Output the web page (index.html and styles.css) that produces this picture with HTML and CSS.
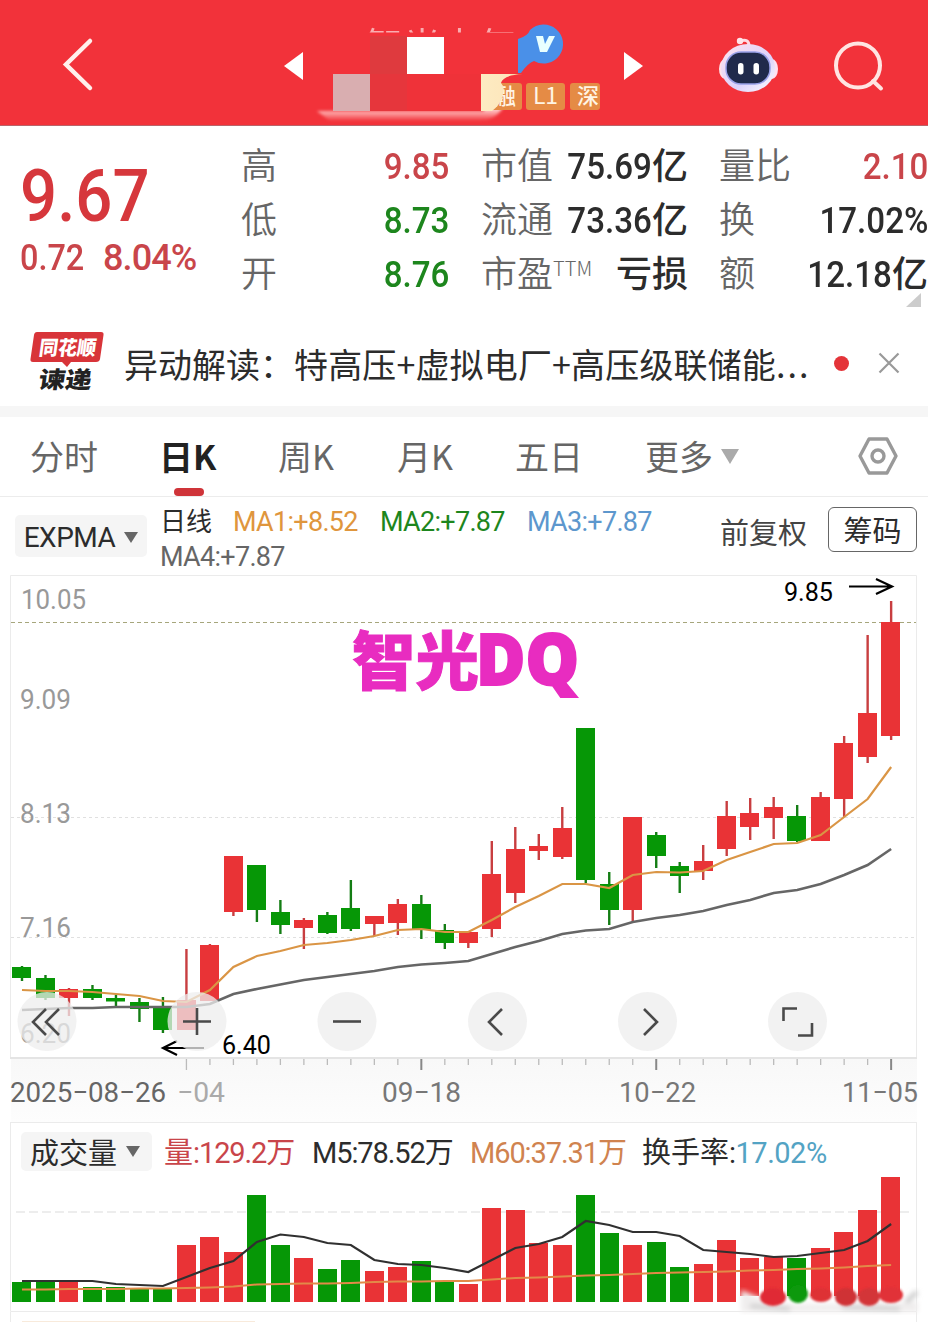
FILE: index.html
```
<!DOCTYPE html>
<html lang="zh-CN">
<head>
<meta charset="utf-8">
<title>日K</title>
<link rel="stylesheet" href="styles.css">
</head>
<body>
<header class="topbar">
  <svg width="928" height="126" viewBox="0 0 928 126">
    <defs>
      <linearGradient id="fade" x1="0" y1="0" x2="0" y2="1"><stop offset="0" stop-color="#fff"/><stop offset=".4" stop-color="#fbb"/><stop offset="1" stop-color="#f2323a"/></linearGradient>
      <linearGradient id="cream" x1="0" y1="0" x2="1" y2="0"><stop offset="0" stop-color="#fdebc2"/><stop offset=".7" stop-color="#fde6bb"/><stop offset="1" stop-color="#f0ae70"/></linearGradient>
      <linearGradient id="helmet" x1="0" y1="0" x2="1" y2="1"><stop offset="0" stop-color="#ffe3ee"/><stop offset=".6" stop-color="#dcd2fb"/><stop offset="1" stop-color="#fff"/></linearGradient>
      <clipPath id="sliver"><rect x="360" y="25" width="160" height="7.500"/></clipPath>
      <filter id="soft"><feGaussianBlur stdDeviation="1.6"/></filter>
    </defs>
    <path d="M90 41L66 64.500L90 88" fill="none" stroke="#fff0ec" stroke-width="4.500" stroke-linecap="round"/>
    <path d="M303 52V80L284 66Z" fill="#fff"/>
    <path d="M624 52V80L643 66Z" fill="#fff"/>
    <g clip-path="url(#sliver)"><text class="cjk" x="366" y="60" font-size="37" textLength="150" fill="#fff" opacity=".6">智光电气</text></g>
    <path d="M370 36H407V74H444V110H370Z" fill="#df3a3e"/>
    <path d="M407 74H444V110H395Z" fill="#ef3238"/>
    <path d="M317 111H484V104H505Q497 121 478 121H330Z" fill="url(#fade)" filter="url(#soft)"/>
    <rect x="370" y="74" width="111" height="37" fill="#ef3239"/>
    <rect x="370" y="74" width="37" height="37" fill="#e6363c"/>
    <rect x="333" y="74" width="37" height="37" fill="#d9aeb0"/>
    <rect x="407" y="37" width="37" height="37" fill="#fff"/>
    <path d="M518 39Q528 36 530 30A19.500 19.500 0 1 1 534 61Q528 63 521 73H518Z" fill="#4a90e8"/>
    <path d="M536 36H543L545 44L549 36H555L547 52H540Z" fill="#e8ffff"/>
    <rect x="484" y="83" width="38" height="27" rx="3" fill="#e58b45"/>
    <text class="cjk" x="494" y="104" font-size="22" font-weight="500" fill="#fff4e4">融</text>
    <path d="M481 74H523Q503 75 501 83Q506 88 502 97Q500 105 492 111H481Z" fill="url(#cream)"/>
    <rect x="526" y="83" width="39" height="27" rx="3" fill="#e58b45"/>
    <text class="cjk" x="533" y="104" font-size="23" textLength="25" fill="#fff4e4">L1</text>
    <rect x="570" y="83" width="30" height="27" rx="3" fill="#e58b45"/>
    <text class="cjk" x="577" y="104" font-size="22" font-weight="500" fill="#fff4e4">深</text>
    <path d="M740 41Q749 38 749 46" fill="none" stroke="#ffd9e2" stroke-width="3"/><circle cx="740" cy="41" r="3.200" fill="#ffe5ea"/>
    <ellipse cx="725" cy="69" rx="6" ry="10" fill="#ffe1e8"/><ellipse cx="772" cy="69" rx="6" ry="10" fill="#ffe1f2"/>
    <ellipse cx="748" cy="68" rx="27" ry="24" fill="url(#helmet)"/>
    <rect x="726" y="52" width="44" height="32" rx="15" fill="#202a4b" stroke="#98a0e8" stroke-width="1.500"/>
    <rect x="738" y="63" width="5.500" height="11.500" rx="2.700" fill="#fff"/><rect x="753.500" y="63" width="5.500" height="11.500" rx="2.700" fill="#fff"/>
    <circle cx="858" cy="65.500" r="22" fill="none" stroke="#ffe5e2" stroke-width="4"/>
    <path d="M873 81L881 88.500" stroke="#ffe5e2" stroke-width="4" stroke-linecap="round"/>
  </svg>
</header>

<section class="quote">
  <div class="last">
    <div class="price">9.67</div>
    <div class="change"><em>0.72</em><span>8.04%</span></div>
  </div>
  <dl class="stats stats-a">
    <dt>高</dt><dd class="up"><em>9.85</em></dd>
    <dt>低</dt><dd class="down"><em>8.73</em></dd>
    <dt>开</dt><dd class="down"><em>8.76</em></dd>
  </dl>
  <dl class="stats stats-b">
    <dt>市值</dt><dd><em>75.69</em><i>亿</i></dd>
    <dt>流通</dt><dd><em>73.36</em><i>亿</i></dd>
    <dt>市盈<sup>TTM</sup></dt><dd><i>亏损</i></dd>
  </dl>
  <dl class="stats stats-c">
    <dt>量比</dt><dd class="up"><em>2.10</em></dd>
    <dt>换</dt><dd><em>17.02%</em></dd>
    <dt>额</dt><dd><em>12.18</em><i>亿</i></dd>
  </dl>
  <span class="corner"></span>
</section>

<section class="news">
  <svg class="brand" width="76" height="66" viewBox="0 0 76 66">
    <path d="M7 3H71Q74 3 73.500 6L70 30Q69.500 33 66 33H41L37 38L32 33H3Q0 33 .5 30L4 6Q4.500 3 7 3Z" fill="#d83439"/>
    <g transform="skewX(-8)" class="cjk" font-weight="900">
      <text x="12" y="26" font-size="20" textLength="57" lengthAdjust="spacingAndGlyphs" fill="#fff">同花顺</text>
      <text x="16" y="59" font-size="23" textLength="53" lengthAdjust="spacingAndGlyphs" fill="#222">谏递</text>
    </g>
  </svg>
  <p class="headline">异动解读：<span>特高压+虚拟电厂+高压级联储能<b>...</b></span></p>
  <span class="dot"></span>
  <svg class="close" width="22" height="22" viewBox="0 0 22 22"><path d="M1.500 1.500L20.500 20.500M20.500 1.500L1.500 20.500" stroke="#999" stroke-width="2.200"/></svg>
</section>

<nav class="tabs">
  <span class="tab t1">分时</span>
  <span class="tab t2 active">日K</span>
  <span class="tab t3">周K</span>
  <span class="tab t4">月K</span>
  <span class="tab t5">五日</span>
  <span class="tab t6">更多<i class="caret"></i></span>
  <svg class="gear" width="40" height="38" viewBox="0 0 40 38"><path d="M11 2H29L38 19L29 36H11L2 19Z" fill="none" stroke="#999" stroke-width="3.400" stroke-linejoin="round"/><circle cx="20" cy="19" r="6" fill="none" stroke="#999" stroke-width="3.400"/></svg>
</nav>

<section class="indicator">
  <div class="select">EXPMA<i class="caret small"></i></div>
  <div class="legend">
    <div class="row"><span class="period">日线</span><span class="ma1">MA1:+8.52</span><span class="ma2">MA2:+7.87</span><span class="ma3">MA3:+7.87</span></div>
    <div class="row"><span class="ma4">MA4:+7.87</span></div>
  </div>
  <span class="adjust">前复权</span>
  <span class="chips">筹码</span>
</section>

<section class="chart">
  <svg id="kline" width="928" height="547" viewBox="0 575 928 547">
    <defs><linearGradient id="axisbg" x1="0" y1="0" x2="0" y2="1"><stop offset="0" stop-color="#f8f8f8"/><stop offset="1" stop-color="#fdfdfd"/></linearGradient></defs>
    <rect x="11" y="1059" width="906" height="63" fill="url(#axisbg)"/>
    <path d="M10.500 1058V575.500H916.500V1058" fill="none" stroke="#ebebeb"/>
    <path d="M10 1058H917" stroke="#e4e4e4" stroke-width="2"/>
    <path d="M11 817.500H916M11 937.500H916" stroke="#e0e0e0" stroke-dasharray="3 3"/>
    <path d="M11 622.500H916" stroke="#a6a67c" stroke-dasharray="4 3"/>
    <g class="num" font-size="27" fill="#999">
      <text x="21" y="609" textLength="65" lengthAdjust="spacingAndGlyphs">10.05</text>
      <text x="20" y="709" textLength="51" lengthAdjust="spacingAndGlyphs">9.09</text>
      <text x="20" y="823" textLength="51" lengthAdjust="spacingAndGlyphs">8.13</text>
      <text x="20" y="937" textLength="51" lengthAdjust="spacingAndGlyphs">7.16</text>
      <text x="20" y="1043" textLength="51" lengthAdjust="spacingAndGlyphs">6.20</text>
    </g>
    <g id="candles"></g>
    <g fill="#e82cc0" stroke="#e82cc0">
      <text class="cjk" x="352" y="684" font-size="63" font-weight="900" textLength="127" lengthAdjust="spacingAndGlyphs">智光</text>
      <text class="latin" x="476" y="685" font-size="71" font-weight="800" textLength="103" lengthAdjust="spacingAndGlyphs" stroke-width="2">DQ</text>
    </g>
    <g fill="none" stroke="#000" stroke-width="2.200">
      <path d="M849 586.500H891M876 579L892 586.500L876 594"/>
      <path d="M204 1048H163M177 1041L163 1048L177 1055"/>
    </g>
    <g class="num" font-size="26" fill="#000">
      <text x="784" y="601" textLength="49" lengthAdjust="spacingAndGlyphs">9.85</text>
      <text x="222" y="1054" textLength="49" lengthAdjust="spacingAndGlyphs">6.40</text>
    </g>
    <g fill="#eee" fill-opacity=".75">
      <circle cx="47" cy="1021.500" r="29.500"/><circle cx="197" cy="1021.500" r="29.500"/><circle cx="347" cy="1021.500" r="29.500"/><circle cx="497.500" cy="1021.500" r="29.500"/><circle cx="647.500" cy="1021.500" r="29.500"/><circle cx="797.500" cy="1021.500" r="29.500"/>
    </g>
    <g fill="none" stroke="#4a4a4a" stroke-width="2.600">
      <path d="M46 1009L33 1022L46 1035M59 1009L46 1022L59 1035"/>
      <path d="M183 1021.500H211M197 1008V1035"/>
      <path d="M333 1021.500H361"/>
      <path d="M502 1009L489 1022L502 1035"/>
      <path d="M644 1009L657 1022L644 1035"/>
      <path d="M783.500 1021V1008.500H797M812 1023V1035.500H798"/>
    </g>
    <g id="ticks"></g>
    <g class="num" font-size="28" fill="#666">
      <text x="10" y="1102" textLength="156" lengthAdjust="spacingAndGlyphs">2025−08−26</text>
      <text x="177" y="1102" textLength="48" lengthAdjust="spacingAndGlyphs" fill="#aaa">−04</text>
      <text x="382" y="1102" textLength="79" lengthAdjust="spacingAndGlyphs" fill="#777">09−18</text>
      <text x="619" y="1102" textLength="77" lengthAdjust="spacingAndGlyphs" fill="#777">10−22</text>
      <text x="842" y="1102" textLength="76" lengthAdjust="spacingAndGlyphs" fill="#777">11−05</text>
    </g>
  </svg>
</section>

<section class="volume">
  <div class="vol-head">
    <div class="select">成交量<i class="caret small"></i></div>
    <span class="v1">量<em>:129.2</em>万</span>
    <span class="v2"><em>M5:78.52</em>万</span>
    <span class="v3"><em>M60:37.31</em>万</span>
    <span class="v4">换手率<em>:<b>17.02%</b></em></span>
  </div>
  <svg id="vol" width="928" height="145" viewBox="0 1177 928 145">
    <defs>
      <filter id="smear"><feGaussianBlur stdDeviation="2.500"/></filter>
      <filter id="edge"><feGaussianBlur stdDeviation="1"/></filter>
    </defs>
    <path d="M10.500 1170V1311M916.500 1170V1311M10.500 1322V1311.500H916.500V1322" fill="none" stroke="#ebebeb"/>
    <path d="M16 1212H912" stroke="#e8e8e8" stroke-width="1.500" stroke-dasharray="9 4"/>
    <path d="M22 1321.500H255" stroke="#f8eadb"/>
    <g id="bars"></g>
    <g filter="url(#smear)">
      <path d="M741 1290L763 1299L790 1304L918 1302V1312H741Z" fill="#f0eeee"/>
      <path d="M750 1306L790 1309M842 1307L900 1309" stroke="#ccc" stroke-width="4"/>
      <path d="M906 1302L917 1292" stroke="#ccc" stroke-width="5"/>
    </g>
    <g filter="url(#edge)">
      <ellipse cx="773" cy="1297" rx="13" ry="9" fill="#e02c36"/>
      <ellipse cx="798" cy="1294" rx="10" ry="9" fill="#0a990a"/>
      <ellipse cx="821" cy="1295" rx="11" ry="7" fill="#de3036"/>
      <ellipse cx="846" cy="1297" rx="11" ry="9" fill="#cf3036"/>
      <ellipse cx="869" cy="1297" rx="11" ry="9" fill="#d33438"/>
      <ellipse cx="891" cy="1295" rx="12" ry="8" fill="#e13238"/>
    </g>
  </svg>
</section>
<script src="chart.js"></script>
</body>
</html>
```
FILE: styles.css
```
* { box-sizing: border-box; }
body { margin: 0; width: 928px; height: 1322px; overflow: hidden; background: #fff; color: #2c2c2c; font-family: Roboto, "Noto Sans CJK SC", sans-serif; }
i, em { font-style: normal; }
svg { display: block; flex: none; }
.cjk { font-family: "Noto Sans CJK SC", sans-serif; }
.num { font-family: Roboto, sans-serif; }
.latin { font-family: "Open Sans", "Noto Sans", sans-serif; }

.topbar { height: 126px; background: #f2323a; border-bottom: 1px solid #b9646a; }

.quote { position: relative; display: flex; height: 194px; padding-top: 14px; white-space: nowrap; }
.last { width: 241px; padding-left: 20px; color: #d6373c; }
.price { margin-top: 15px; height: 82px; line-height: 82px; font-size: 73px; font-weight: 500; transform: scaleX(.895); transform-origin: left; }
.change { display: flex; margin-top: 1px; line-height: 41px; font-size: 36px; color: #c9454a; font-weight: 500; }
.change em { width: 83px; transform: scaleX(.9); transform-origin: left; }
.change span { letter-spacing: -.9px; }
.stats { display: grid; grid-template-columns: 72px 1fr; grid-auto-rows: 54px; margin: 0; line-height: 54px; font-size: 36px; }
.stats-a { width: 208px; }
.stats-b { width: 207px; margin-left: 32px; }
.stats-c { width: 209px; margin-left: 31px; }
.stats dt { color: #666; font-family: "Noto Sans CJK SC", sans-serif; font-weight: 350; line-height: 46px; }
.stats dd { margin: 0; text-align: right; font-weight: 500; }
.stats dd em { display: inline-block; transform: scaleX(.92); transform-origin: right; }
.stats dd i { font-family: "Noto Sans CJK SC", sans-serif; line-height: 0; }
.stats sup { font-size: 20px; line-height: 0; vertical-align: 11px; font-weight: 300; }
.up { color: #c9454a; }
.down { color: #1d861d; }
.corner { position: absolute; right: 7px; bottom: 13px; border-left: 15px solid transparent; border-bottom: 14px solid #ccc; }

.news { display: flex; align-items: center; height: 97px; padding: 0 0 0 30px; border-bottom: 11px solid #f6f6f6; white-space: nowrap; }
.brand { margin-top: -2px; }
.headline { display: flex; margin: 0 0 0 18px; width: 710px; font: 34px "Noto Sans CJK SC", sans-serif; }
.headline span { letter-spacing: .15px; }
.headline b { font-weight: 400; letter-spacing: 2px; }
.dot { width: 15px; height: 15px; border-radius: 50%; background: #e43439; }
.close { margin-left: 29px; }

.tabs { display: flex; height: 80px; border-bottom: 1px solid #ececec; font: 34px/78px "Noto Sans CJK SC", sans-serif; color: #666; white-space: nowrap; }
.t1 { margin-left: 30px; width: 129px; }
.t2 { width: 119px; }
.t3 { width: 119px; }
.t4 { width: 118px; }
.t5 { width: 130px; }
.t6 { display: flex; align-items: center; width: 213px; height: 78px; }
.active { display: flex; flex-direction: column; height: 79px; color: #222; font-weight: 700; }
.active::after { content: ""; flex: none; width: 30px; height: 8px; margin: -7px 0 0 15px; border-radius: 4px; background: #cf3439; }
.caret { display: inline-block; margin-left: 8px; border: 9px solid transparent; border-bottom: 0; border-top: 15px solid #aaa; }
.caret.small { margin-left: 9px; border-width: 11px 7.500px 0; border-top-color: #666; }
.gear { margin-top: 20px; }

.indicator { display: flex; height: 78px; white-space: nowrap; }
.select { display: flex; align-items: center; justify-content: center; background: #f5f5f5; border-radius: 5px; }
.indicator .select { width: 132px; height: 42px; margin: 18px 0 0 15px; padding-top: 2px; font-size: 28px; letter-spacing: -.5px; }
.legend { width: 560px; margin: 6px 0 0 13px; font-size: 27px; letter-spacing: -.7px; }
.row { display: flex; height: 35px; line-height: 38px; }
.period { width: 73px; font: 26px/33px "Noto Sans CJK SC", sans-serif; letter-spacing: 0; }
.ma1 { width: 147px; color: #df963d; }
.ma2 { width: 147px; color: #1d861d; }
.ma3 { color: #5d97cd; }
.ma4 { color: #666; }
.adjust { width: 108px; font: 29px/69px "Noto Sans CJK SC", sans-serif; color: #444; }
.chips { width: 89px; height: 45px; margin-top: 10px; border: 1.500px solid #666; border-radius: 6px; text-align: center; font: 29px/43px "Noto Sans CJK SC", sans-serif; }

.chart { height: 547px; }

.volume { height: 200px; }
.vol-head { display: flex; height: 55px; margin: 0 11px 0 10px; padding-left: 10px; border: 1px solid #ebebeb; border-bottom: 0; line-height: 55px; font-family: "Noto Sans CJK SC", sans-serif; font-size: 29px; white-space: nowrap; }
.vol-head em { font-family: Roboto, sans-serif; letter-spacing: -1.1px; }
.vol-head .select { width: 131px; height: 39px; margin: 9px 12px 0 0; padding-right: 3px; line-height: 39px; }
.v1 { width: 148px; color: #c9454a; }
.v2 { width: 158px; }
.v3 { width: 172px; color: #d0834f; }
.vol-head .v4 em { letter-spacing: -.5px; }
.v4 b { font-weight: 400; color: #53a3c4; }
```
FILE: chart.js
```
const RED = '#e93336', GREEN = '#069706';
const x = i => 22 + 23.49 * i;
// colour, high, body top, body bottom, low, volume top
const days = [
  ['g',966,967,978,981,1282],['g',975,978,998,1000,1282],['r',988,989,998,1016,1282],['g',985,989,998,1000,1287],
  ['g',995,998,1001.5,1006,1287],['g',998,1002,1009,1022,1288],['g',997,1006,1030,1033,1288],['r',949,1000,1030,1030,1245],
  ['r',944,945,1001,1001,1237],['r',856,856,912,916,1252],['g',865,865,910,922,1195],['g',900,912,925,934,1245],
  ['r',918,920,928,949,1258],['g',912,915,933,934,1269],['g',880,908,929,931,1260],['r',916,916,924,936,1271],
  ['r',899,904,923,935,1267],['g',895,904,930,939,1261],['g',924,930,943,949,1282],['r',931,932,943,948,1284],
  ['r',841,874,929,937,1208],['r',827,849,893,903,1210],['r',834,846,851,860,1243],['r',807,828,857,859,1245],
  ['g',728,728,880,883,1195],['g',872,884,910,925,1233],['r',817,817,910,921,1245],['g',832,835,856,868,1242],
  ['g',862,866,876,893,1267],['r',845,861,871,880,1264],['r',801,816,849,856,1240],['r',798,813,827,840,1258],
  ['r',797,807,818,839,1257],['g',805,816,841,842,1258],['r',792,797,841,841,1248],['r',736,743,799,817,1232],
  ['r',635,713,757,763,1210],['r',601,622,736,740,1176]
];
const ma1 = [990,991,991,992,994,996,1001,1002,990,967,956,951,945,943,940,936,930,929,932,932,920,907,896,884,884,888,875,872,872.5,871,860,852,844,843,835,817,799,767];
const ma4 = [1010,1009,1008,1008,1007,1007,1007,1007,1004,994,989,984.5,980,977,974,971,967,964.5,963,961,954,947,941,934,930.5,929,922,918,915,911,905,900,893,890,884,875,865,849];
const m5 = [1281,1281,1281,1281,1284,1285,1286,1277,1268,1261,1242,1234.5,1237,1243,1245,1260,1264,1265,1268,1272,1260,1248,1244,1237,1221,1225,1232,1232,1236,1250,1252,1254,1257,1256,1253,1250,1241,1224];
const m60 = [1289.5,1289.5,1289,1289,1289,1288.5,1288.5,1288,1287.5,1286.5,1284.5,1284,1283.5,1283.5,1283,1282,1281.5,1281.5,1281,1281,1279.5,1278,1277.5,1276.5,1275.5,1275,1274,1273,1272.5,1272,1271.5,1270.5,1270,1269,1268.5,1267.5,1266,1265];
const line = (ys, color, w) => `<polyline fill="none" stroke="${color}" stroke-width="${w}" points="${ys.map((y, i) => x(i) + ',' + y).join(' ')}"/>`;

let candles = '', bars = '', ticks = '';
days.forEach(([c, hi, top, bottom, lo, vol], i) => {
  const fill = c === 'r' ? RED : GREEN;
  const wick = c === 'r' ? '#c83e40' : '#147d14';
  const left = Math.round(x(i) - 9.7);
  candles += `<path d="M${x(i)} ${hi}V${lo}" stroke="${wick}" stroke-width="2.4"/><rect x="${left}" y="${top}" width="19" height="${bottom - top}" fill="${fill}"/>`;
  bars += `<rect x="${left}" y="${vol}" width="19" height="${(i > 30 ? 1296 : 1302) - vol}" fill="${fill}"/>`;
  if (i > 6) {
    const major = [17, 27, 37].includes(i);
    ticks += `<path d="M${x(i)} 1059V${major || i === 7 ? 1070 : 1065}" stroke="${major ? '#888' : '#bbb'}" stroke-width="${major ? 2 : 1.3}"/>`;
  }
});
document.getElementById('candles').innerHTML = candles + line(ma4, '#666', 2.6) + line(ma1, '#da9545', 2.2);
document.getElementById('bars').innerHTML = bars + line(m60, '#e28a48', 2) + line(m5, '#303030', 2.2);
document.getElementById('ticks').innerHTML = ticks;
```
